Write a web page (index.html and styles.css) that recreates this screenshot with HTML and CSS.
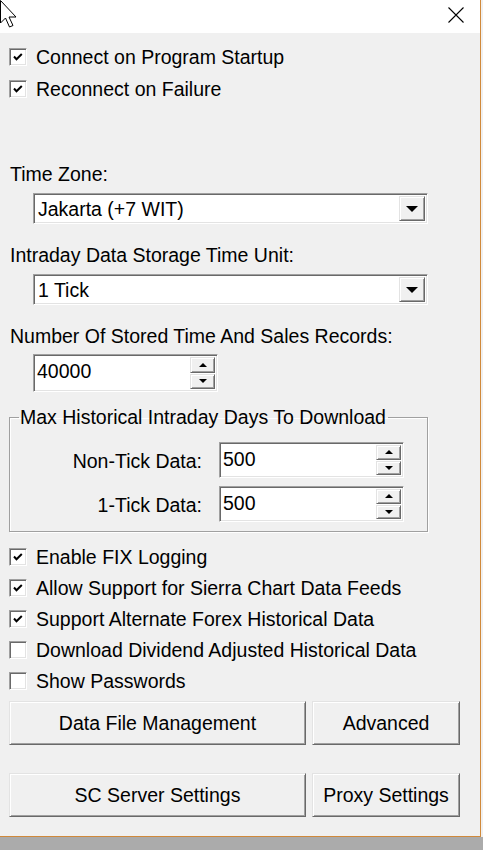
FILE: index.html
```html
<!DOCTYPE html>
<html lang="en">
<head>
  <meta charset="UTF-8">
  <title>Data/Trade Service Settings</title>
  <link rel="stylesheet" href="styles.css">
</head>
<body>
  <div class="window">
    <header class="titlebar">
      <svg class="cursor" width="18" height="28" viewBox="0 0 18 28" aria-hidden="true">
        <path d="M0.5 0.5 L0.5 23 L5.5 18 L9.5 27 L13 25.5 L9 17 L16 17 Z" fill="#fff" stroke="#000" stroke-width="1"/>
      </svg>
      <svg class="close" width="16" height="16" viewBox="0 0 16 16" aria-label="Close">
        <path d="M0.5 0.5 L15.5 15.5 M15.5 0.5 L0.5 15.5" stroke="#000" stroke-width="1.1"/>
      </svg>
    </header>

    <main class="content">
      <label class="check"><span class="box on"></span>Connect on Program Startup</label>
      <label class="check"><span class="box on"></span>Reconnect on Failure</label>

      <div class="field-label first">Time Zone:</div>
      <div class="select">
        <span class="select-value">Jakarta (+7 WIT)</span>
        <span class="select-btn"><i class="tri-down"></i></span>
      </div>

      <div class="field-label">Intraday Data Storage Time Unit:</div>
      <div class="select">
        <span class="select-value">1 Tick</span>
        <span class="select-btn"><i class="tri-down"></i></span>
      </div>

      <div class="field-label">Number Of Stored Time And Sales Records:</div>
      <div class="spin records">
        <span class="spin-value">40000</span>
        <span class="spin-btns">
          <span class="spin-btn"><i class="tri-up-sm"></i></span>
          <span class="spin-btn"><i class="tri-down-sm"></i></span>
        </span>
      </div>

      <fieldset class="group">
        <legend>Max Historical Intraday Days To Download</legend>
        <div class="group-row">
          <span class="group-label">Non-Tick Data:</span>
          <div class="spin">
            <span class="spin-value">500</span>
            <span class="spin-btns">
              <span class="spin-btn"><i class="tri-up-sm"></i></span>
              <span class="spin-btn"><i class="tri-down-sm"></i></span>
            </span>
          </div>
        </div>
        <div class="group-row">
          <span class="group-label">1-Tick Data:</span>
          <div class="spin">
            <span class="spin-value">500</span>
            <span class="spin-btns">
              <span class="spin-btn"><i class="tri-up-sm"></i></span>
              <span class="spin-btn"><i class="tri-down-sm"></i></span>
            </span>
          </div>
        </div>
      </fieldset>

      <div class="checks-lower">
        <label class="check tight"><span class="box on"></span>Enable FIX Logging</label>
        <label class="check tight"><span class="box on"></span>Allow Support for Sierra Chart Data Feeds</label>
        <label class="check tight"><span class="box on"></span>Support Alternate Forex Historical Data</label>
        <label class="check tight"><span class="box"></span>Download Dividend Adjusted Historical Data</label>
        <label class="check tight"><span class="box"></span>Show Passwords</label>
      </div>

      <div class="btn-row">
        <button class="btn wide">Data File Management</button>
        <button class="btn">Advanced</button>
      </div>
      <div class="btn-row second">
        <button class="btn wide">SC Server Settings</button>
        <button class="btn">Proxy Settings</button>
      </div>
    </main>
  </div>
</body>
</html>
```

FILE: styles.css
```css
/* Base */
* {
  box-sizing: border-box;
  margin: 0;
  padding: 0;
}

:root {
  --face: #f0f0f0;
  --light: #ffffff;
  --light-2: #e3e3e3;
  --shadow: #a0a0a0;
  --dark: #696969;
  --frame: #d0893a;
}

body {
  background: #ababab;
  font-family: "Liberation Sans", Arial, sans-serif;
  font-size: 19.5px;
  color: #000;
  width: 483px;
  height: 850px;
  overflow: hidden;
}

/* Window frame */
.window {
  width: 481px;
  height: 837px;
  border-right: 1px solid var(--frame);
  border-bottom: 1px solid var(--frame);
  box-shadow: 2px 0 0 var(--face);
  display: flex;
  flex-direction: column;
  position: relative;
}

.titlebar {
  height: 33px;
  background: #fff;
  display: flex;
  justify-content: flex-end;
  padding: 7px 16px 0 0;
}

.cursor {
  position: absolute;
  left: 0;
  top: 0;
}

.content {
  flex: 1;
  background: var(--face);
  padding-top: 8px;
  display: flex;
  flex-direction: column;
  align-items: flex-start;
}

/* Checkboxes */
.check {
  display: flex;
  align-items: center;
  height: 32px;
  padding-left: 9px;
  gap: 9px;
  line-height: 22px;
  white-space: nowrap;
}

.check.tight {
  height: 31px;
}

.box {
  width: 18px;
  height: 18px;
  background: #fff;
  border-top: 1px solid var(--shadow);
  border-left: 1px solid var(--shadow);
  border-right: 1px solid var(--light);
  border-bottom: 1px solid var(--light);
  box-shadow: inset 1px 1px 0 var(--dark), inset -1px -1px 0 var(--light-2);
  display: flex;
  align-items: center;
  justify-content: center;
}

.box.on::before {
  content: "";
  width: 10px;
  height: 8px;
  background: url("data:image/svg+xml;utf8,<svg xmlns='http://www.w3.org/2000/svg' width='10' height='8' viewBox='0 0 10 8'><path d='M1 3.5 L3.5 6.2 L8.8 1' fill='none' stroke='black' stroke-width='2'/></svg>") no-repeat center;
}

/* Labels over inputs */
.field-label {
  line-height: 22px;
  padding-left: 10px;
  margin-top: 20px;
}

.field-label.first {
  margin-top: 58px;
}

/* Sunken input look */
.select,
.spin {
  background: #fff;
  border-top: 1px solid var(--shadow);
  border-left: 1px solid var(--shadow);
  border-right: 1px solid var(--light);
  border-bottom: 1px solid var(--light);
  box-shadow: inset 1px 1px 0 var(--dark), inset -1px -1px 0 var(--light-2);
  display: flex;
  padding: 2px;
}

.select {
  width: 395px;
  height: 31px;
  margin: 8px 0 0 33px;
}

.select-value {
  flex: 1;
  padding-left: 2px;
  line-height: 26px;
}

.select-btn,
.spin-btn,
.btn {
  background: var(--face);
  border-top: 1px solid var(--light-2);
  border-left: 1px solid var(--light-2);
  border-right: 1px solid var(--dark);
  border-bottom: 1px solid var(--dark);
  box-shadow: inset 1px 1px 0 var(--light), inset -1px -1px 0 var(--shadow);
}

.select-btn {
  width: 26px;
  display: flex;
  align-items: center;
  justify-content: center;
}

.tri-down {
  width: 0;
  height: 0;
  border-left: 6px solid transparent;
  border-right: 6px solid transparent;
  border-top: 6px solid #000;
}

/* Spin edits */
.spin {
  width: 185px;
  height: 38px;
}

.records {
  margin: 7px 0 0 33px;
}

.spin-value {
  flex: 1;
  line-height: 22px;
  padding: 3px 0 0 1px;
}

.spin-btns {
  width: 25px;
  display: flex;
  flex-direction: column;
  gap: 1px;
}

.spin-btn {
  flex: 1;
  display: flex;
  align-items: center;
  justify-content: center;
}

.tri-up-sm,
.tri-down-sm {
  width: 0;
  height: 0;
  border-left: 4px solid transparent;
  border-right: 4px solid transparent;
}

.tri-up-sm {
  border-bottom: 4px solid #000;
}

.tri-down-sm {
  border-top: 4px solid #000;
}

/* Group box */
.group {
  width: 419px;
  margin: 14px 0 0 9px;
  border: 1px solid var(--shadow);
  box-shadow: inset 1px 1px 0 var(--light), 1px 1px 0 var(--light);
  padding: 14px 0 9px;
  display: flex;
  flex-direction: column;
  gap: 8px;
}

.group legend {
  margin-left: 9px;
  padding: 0 2px 0 1px;
  line-height: 22px;
}

.group-row {
  display: grid;
  grid-template-columns: 192px 185px;
  column-gap: 17px;
  align-items: center;
}

.group-row .spin {
  height: 36px;
}

.group-label {
  text-align: right;
  padding-top: 2px;
}

/* Lower checkboxes */
.checks-lower {
  margin-top: 9px;
  display: flex;
  flex-direction: column;
}

/* Push buttons */
.btn-row {
  display: flex;
  gap: 6px;
  padding-left: 9px;
  margin-top: 5px;
}

.btn-row.second {
  margin-top: 28px;
}

.btn {
  font: inherit;
  color: #000;
  width: 148px;
  height: 44px;
}

.btn.wide {
  width: 297px;
}
```
